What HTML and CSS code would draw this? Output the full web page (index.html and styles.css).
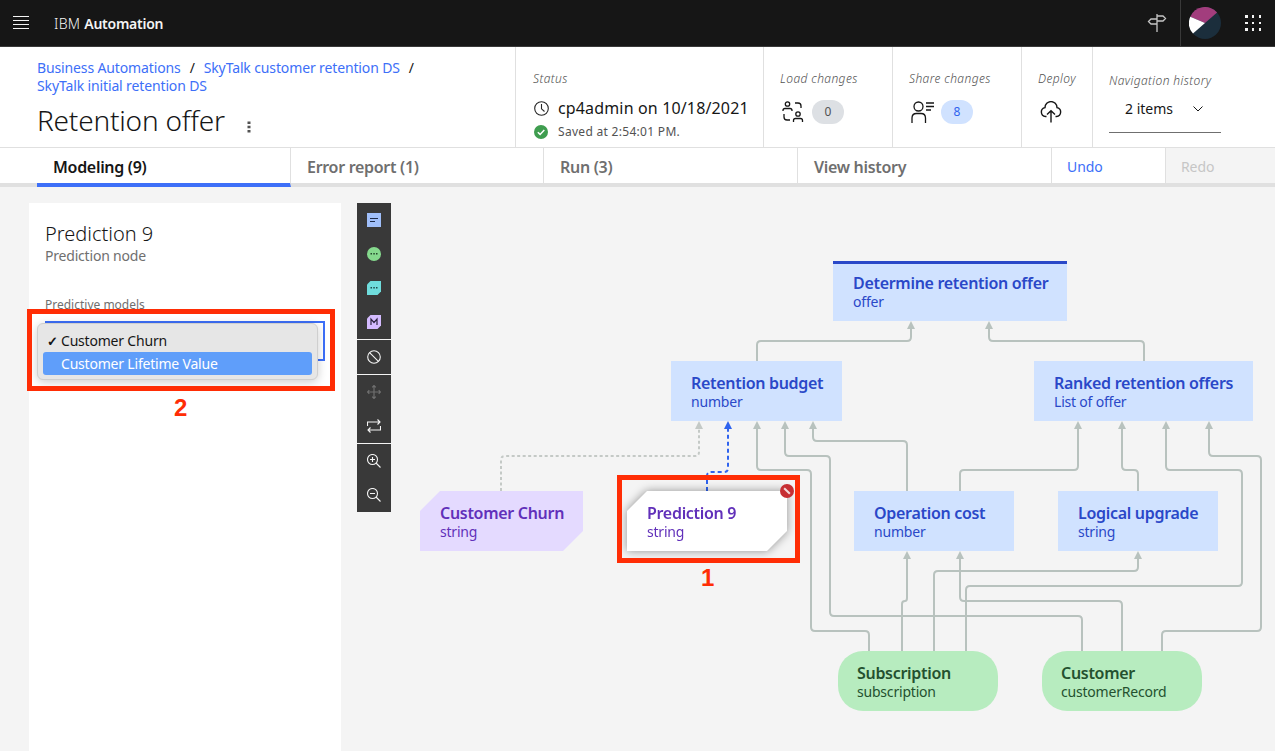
FILE: index.html
```html
<!DOCTYPE html>
<html lang="en">
	<head>
		<meta charset="UTF-8" />
		<meta name="viewport" content="width=device-width, initial-scale=1.0" />
		<title>Retention offer</title>
		<link rel="stylesheet" href="styles.css">
	</head>
	<body>
		<header class="topbar">
			<svg class="menu-icon" width="16" height="14" viewBox="0 0 16 14">
				<path d="M0 .5H16M0 4.5H16M0 8.5H16M0 12.5H16" stroke="#f4f4f4" fill="none" />
			</svg>
			<div class="brand">IBM <b>Automation</b></div>
			<svg class="sign-icon" width="20" height="20" viewBox="0 0 20 20">
				<path d="M10 1V19M10 3H16L18.5 5.5 16 8H10M10 6H4L1.5 8.5 4 11H10" stroke="#c6c6c6" stroke-width="1.3" fill="none" />
			</svg>
			<div class="avatar-cell">
				<svg width="32" height="32" viewBox="0 0 32 32">
					<circle cx="16" cy="16" r="16" fill="#1b2e3c" />
					<path d="M16 16L1.3 9.7A16 16 0 0 1 28.1 5.5Z" fill="#a23d7d" />
					<path d="M16 16L1.3 9.7A16 16 0 0 0 4 26.6Z" fill="#fff" />
				</svg>
			</div>
			<div class="apps-icon">
				<i></i><i></i><i></i><i></i><i></i><i></i><i></i><i></i><i></i>
			</div>
		</header>

		<section class="subheader">
			<div class="title-block">
				<nav class="crumbs">
					<a>Business Automations</a><span>/</span><a>SkyTalk customer retention DS</a><span>/</span><br />
					<a>SkyTalk initial retention DS</a>
				</nav>
				<div class="title-row">
					<h1>Retention offer</h1>
					<svg width="4" height="12" viewBox="0 0 4 12">
						<path d="M.5 .5h3v2.5h-3zM.5 4.8h3v2.5h-3zM.5 9h3v2.5h-3z" fill="#525252" />
					</svg>
				</div>
			</div>

			<div class="info status">
				<div class="info-label">Status</div>
				<div class="status-line">
					<svg width="15" height="15" viewBox="0 0 15 15" fill="none" stroke="#262626" stroke-width="1.1">
						<circle cx="7.5" cy="7.5" r="6.8" />
						<path d="M7.5 3V7.8L10.5 10.5" />
					</svg>
					<span>cp4admin on 10/18/2021</span>
				</div>
				<div class="saved-line">
					<svg width="14" height="14" viewBox="0 0 14 14">
						<circle cx="7" cy="7" r="7" fill="#3f9d4f" />
						<path d="M3.8 7.2L6.1 9.4 10.3 5" stroke="#fff" stroke-width="1.5" fill="none" />
					</svg>
					<span>Saved at 2:54:01 PM.</span>
				</div>
			</div>

			<div class="info load">
				<div class="info-label">Load changes</div>
				<div class="action-line">
					<svg width="22" height="22" viewBox="0 0 22 22" fill="none" stroke="#161616" stroke-width="1.3">
						<circle cx="5.5" cy="3" r="2.2" />
						<path d="M1 10V9.5Q1 7.5 3 7.5H8Q10 7.5 10 9.5V10" />
						<path d="M13 2H16Q19 2 19 5V7" />
						<path d="M2 13V16Q2 19 5 19H8" />
						<circle cx="16" cy="13" r="2.2" />
						<path d="M11.5 21V19.5Q11.5 17.5 13.5 17.5H18.5Q20.5 17.5 20.5 19.5V21" />
					</svg>
					<span class="badge">0</span>
				</div>
			</div>

			<div class="info share">
				<div class="info-label">Share changes</div>
				<div class="action-line">
					<svg width="23" height="22" viewBox="0 0 23 22" fill="none" stroke="#161616" stroke-width="1.3">
						<circle cx="7.5" cy="5.5" r="4.5" />
						<path d="M1 22V17Q1 12.5 5.5 12.5H10Q14.5 12.5 14.5 17V22" />
						<path d="M15 2H23M15 5.5H23M15 9H20" />
					</svg>
					<span class="badge badge-blue">8</span>
				</div>
			</div>

			<div class="info deploy">
				<div class="info-label">Deploy</div>
				<div class="action-line">
					<svg width="22" height="22" viewBox="0 0 22 22" fill="none" stroke="#161616" stroke-width="1.4">
						<path d="M6.5 15.5H5.5A4.5 4.5 0 0 1 5 6.6 6 6 0 0 1 17 6.6 4.5 4.5 0 0 1 16.5 15.5H15.5" />
						<path d="M11 21.5V10M7 13.5L11 9.7 15 13.5" />
					</svg>
				</div>
			</div>

			<div class="info history">
				<div class="info-label">Navigation history</div>
				<div class="history-select">
					<span>2 items</span>
					<svg width="10" height="6" viewBox="0 0 10 6">
						<path d="M.5 .5L5 5 9.5 .5" stroke="#161616" fill="none" />
					</svg>
				</div>
			</div>
		</section>

		<nav class="tabs">
			<a class="tab tab-active">Modeling (9)</a>
			<a class="tab tab-error">Error report (1)</a>
			<a class="tab tab-run">Run (3)</a>
			<a class="tab tab-view">View history</a>
			<a class="tab-action tab-undo">Undo</a>
			<a class="tab-action tab-redo">Redo</a>
		</nav>

		<main class="workspace">
			<aside class="panel">
				<h2>Prediction 9</h2>
				<div class="panel-sub">Prediction node</div>
				<div class="field-label">Predictive models</div>
				<div class="select-box"></div>
				<ul class="dropdown">
					<li><span class="tick">✓</span>Customer Churn</li>
					<li class="dropdown-hover">Customer Lifetime Value</li>
				</ul>
				<div class="callout callout-panel"></div>
				<div class="callout-num num-panel">2</div>
			</aside>

			<div class="toolbar">
				<div class="tool-group">
					<div class="tool">
						<svg width="14" height="14" viewBox="0 0 14 14"><rect width="14" height="14" fill="#a0bffa" /><path d="M3 5.5H11M3 8.5H8" stroke="#1c2a48" /></svg>
					</div>
					<div class="tool">
						<svg width="14" height="14" viewBox="0 0 14 14"><circle cx="7" cy="7" r="7" fill="#85d98d" /><path d="M3.5 6h1.5v1.5h-1.5zM6.3 6h1.5v1.5h-1.5zM9 6h1.5v1.5h-1.5z" fill="#24482c" /></svg>
					</div>
					<div class="tool">
						<svg width="14" height="14" viewBox="0 0 14 14"><path d="M3.5 0H14V10.5L10.5 14H0V3.5Z" fill="#6fdcdc" /><path d="M3.5 6h1.5v1.5h-1.5zM6.3 6h1.5v1.5h-1.5zM9 6h1.5v1.5h-1.5z" fill="#1f4a4a" /></svg>
					</div>
					<div class="tool">
						<svg width="14" height="14" viewBox="0 0 14 14"><path d="M3.5 0H14V10.5L10.5 14H0V3.5Z" fill="#d4bbff" /><path d="M4 10V4L7 7.5 10 4V10" stroke="#2d2540" stroke-width="1.2" fill="none" /></svg>
					</div>
				</div>
				<div class="tool-group">
					<div class="tool">
						<svg width="14" height="14" viewBox="0 0 14 14" fill="none" stroke="#f4f4f4" stroke-width="1.1"><circle cx="7" cy="7" r="6.3" /><path d="M2.6 2.6L11.4 11.4" /></svg>
					</div>
				</div>
				<div class="tool-group">
					<div class="tool">
						<svg width="14" height="14" viewBox="0 0 14 14" fill="none" stroke="#6f6f6f" stroke-width="1.2"><path d="M7 .5V13.5M.5 7H13.5M5.2 2.3L7 .5 8.8 2.3M5.2 11.7L7 13.5 8.8 11.7M2.3 5.2L.5 7 2.3 8.8M11.7 5.2L13.5 7 11.7 8.8" /></svg>
					</div>
					<div class="tool">
						<svg width="14" height="14" viewBox="0 0 14 14" fill="none" stroke="#f4f4f4" stroke-width="1.1"><path d="M.5 7V3H13M10.5 .5L13 3 10.5 5.5M13.5 7V11H1M3.5 8.5L1 11 3.5 13.5" /></svg>
					</div>
				</div>
				<div class="tool-group">
					<div class="tool">
						<svg width="14" height="14" viewBox="0 0 14 14" fill="none" stroke="#f4f4f4" stroke-width="1.1"><circle cx="5.5" cy="5.5" r="5" /><path d="M9 9L13.5 13.5M5.5 3V8M3 5.5H8" /></svg>
					</div>
					<div class="tool">
						<svg width="14" height="14" viewBox="0 0 14 14" fill="none" stroke="#f4f4f4" stroke-width="1.1"><circle cx="5.5" cy="5.5" r="5" /><path d="M9 9L13.5 13.5M3 5.5H8" /></svg>
					</div>
				</div>
			</div>

			<div class="canvas">
				<svg class="wires" width="884" height="564" viewBox="391 187 884 564" fill="none">
					<defs>
						<marker id="arrow" markerUnits="userSpaceOnUse" markerWidth="8" markerHeight="8" refX="0" refY="4" orient="auto">
							<path d="M0 0L8 4 0 8Z" fill="#b8c2be" />
						</marker>
						<marker id="arrow-dot" markerUnits="userSpaceOnUse" markerWidth="8" markerHeight="8" refX="0" refY="4" orient="auto">
							<path d="M0 0L8 4 0 8Z" fill="#c4c9c6" />
						</marker>
						<marker id="arrow-blue" markerUnits="userSpaceOnUse" markerWidth="8" markerHeight="8" refX="0" refY="4" orient="auto">
							<path d="M0 0L8 4 0 8Z" fill="#2f63ee" />
						</marker>
					</defs>
					<g stroke="#b8c2be" stroke-width="2">
						<path marker-end="url(#arrow)" d="M757 361V345Q757 341 761 341H907Q911 341 911 337V329" />
						<path marker-end="url(#arrow)" d="M1144 361V345Q1144 341 1140 341H993Q989 341 989 337V329" />
						<path marker-end="url(#arrow)" d="M869 651V635Q869 631 865 631H815Q811 631 811 627V474Q811 470 807 470H761Q757 470 757 466V429" />
						<path marker-end="url(#arrow)" d="M1082 651V620Q1082 616 1078 616H834Q830 616 830 612V460Q830 456 826 456H789Q785 456 785 452V429" />
						<path marker-end="url(#arrow)" d="M907 491V445Q907 441 903 441H817Q813 441 813 437V429" />
						<path marker-end="url(#arrow)" d="M960 491V474Q960 470 964 470H1074Q1078 470 1078 466V429" />
						<path marker-end="url(#arrow)" d="M1138 491V474Q1138 470 1134 470H1126Q1122 470 1122 466V429" />
						<path marker-end="url(#arrow)" d="M966 651V590Q966 586 970 586H1238Q1242 586 1242 582V474Q1242 470 1238 470H1170Q1166 470 1166 466V429" />
						<path marker-end="url(#arrow)" d="M1162 651V635Q1162 631 1166 631H1257Q1261 631 1261 627V460Q1261 456 1257 456H1213Q1209 456 1209 452V429" />
						<path marker-end="url(#arrow)" d="M902 651V604Q902 601 905 601Q907 601 907 598V559" />
						<path marker-end="url(#arrow)" d="M1122 651V605Q1122 601 1118 601H964Q960 601 960 597V559" />
						<path marker-end="url(#arrow)" d="M934 651V575Q934 571 938 571H1134Q1138 571 1138 567V559" />
					</g>
					<path d="M501 491V460Q501 456 505 456H695Q699 456 699 452V429" stroke="#c4c9c6" stroke-width="2" stroke-dasharray="3 2.5" marker-end="url(#arrow-dot)" />
					<path d="M707 491V476Q707 472 711 472H724Q728 472 728 468V429" stroke="#2f63ee" stroke-width="2" stroke-dasharray="4 3" marker-end="url(#arrow-blue)" />
				</svg>

				<div class="node decision node-determine"><b>Determine retention offer</b><span>offer</span></div>
				<div class="node decision node-budget"><b>Retention budget</b><span>number</span></div>
				<div class="node decision node-ranked"><b>Ranked retention offers</b><span>List of offer</span></div>
				<div class="node decision node-cost"><b>Operation cost</b><span>number</span></div>
				<div class="node decision node-upgrade"><b>Logical upgrade</b><span>string</span></div>
				<div class="node prediction node-churn"><b>Customer Churn</b><span>string</span></div>
				<div class="selected-wrap">
					<div class="node prediction node-selected"><b>Prediction 9</b><span>string</span></div>
				</div>
				<div class="error-dot"></div>
				<div class="node data node-subscription"><b>Subscription</b><span>subscription</span></div>
				<div class="node data node-customer"><b>Customer</b><span>customerRecord</span></div>
				<div class="callout callout-node"></div>
				<div class="callout-num num-node">1</div>
			</div>
		</main>
	</body>
</html>
```

FILE: styles.css
```css
* {
	box-sizing: border-box;
}

html,
body {
	height: 751px;
}

body {
	margin: 0;
	overflow: hidden;
	display: flex;
	flex-direction: column;
	font-family: "Noto Sans", Arial, sans-serif;
	background-color: #f4f4f4;
	color: #161616;
}

.topbar {
	flex: none;
	height: 47px;
	display: flex;
	align-items: center;
	background-color: #161616;
	border-bottom: 1px solid #393939;
	color: #f4f4f4;
}

.menu-icon {
	margin-left: 13px;
}

.brand {
	margin-left: 25px;
	font-size: 14px;
	font-weight: 300;
	letter-spacing: 0.3px;
}

.brand b {
	font-weight: 600;
	letter-spacing: -0.25px;
}

.sign-icon {
	margin-left: auto;
	margin-right: 13px;
}

.avatar-cell {
	height: 46px;
	padding: 7px 0 7px 8px;
	border-left: 1px solid #393939;
}

.apps-icon {
	display: grid;
	grid-template-columns: repeat(3, 2.5px);
	gap: 4.2px;
	margin: 0 14px 0 24px;
}

.apps-icon i {
	width: 2.5px;
	height: 2.5px;
	background-color: #f4f4f4;
}

.subheader {
	flex: none;
	height: 101px;
	display: flex;
	background-color: #fff;
	border-bottom: 1px solid #e0e0e0;
}

.title-block {
	width: 516px;
	padding: 12px 0 0 37px;
	border-right: 1px solid #e0e0e0;
}

.crumbs {
	font-size: 14px;
	line-height: 18px;
	letter-spacing: -0.13px;
}

.crumbs a {
	color: #3d6ff8;
}

.crumbs span {
	margin: 0 9px;
}

.title-row {
	display: flex;
	align-items: flex-end;
	margin-top: 7px;
}

.title-row h1 {
	margin: 0;
	font-size: 28px;
	line-height: 36px;
	font-weight: 300;
	letter-spacing: -0.2px;
}

.title-row svg {
	margin: 0 0 5px 22px;
}

.info {
	padding: 24px 0 0 16px;
	border-right: 1px solid #e0e0e0;
}

.info-label {
	font-size: 12px;
	line-height: 16px;
	font-weight: 300;
	font-style: italic;
	color: #525252;
	letter-spacing: 0.4px;
}

.status {
	width: 248px;
	padding-left: 17px;
}

.load {
	width: 129px;
}

.share {
	width: 129px;
}

.deploy {
	width: 71px;
}

.status-line {
	display: flex;
	align-items: center;
	gap: 9px;
	margin-top: 9px;
	font-size: 16px;
	line-height: 24px;
	letter-spacing: 0.15px;
}

.status-line svg,
.saved-line svg {
	flex: none;
	margin-left: 1px;
}

.saved-line {
	display: flex;
	align-items: center;
	gap: 10px;
	margin-top: 4px;
	font-size: 12px;
	line-height: 16px;
	color: #525252;
	letter-spacing: 0.3px;
}

.action-line {
	display: flex;
	align-items: center;
	gap: 8px;
	margin-top: 13px;
	padding-left: 2px;
	height: 24px;
}

.share .action-line {
	gap: 7px;
}

.badge {
	width: 32px;
	height: 24px;
	border-radius: 12px;
	text-align: center;
	font-size: 12px;
	line-height: 24px;
	background-color: #dde0e4;
	color: #525252;
}

.badge-blue {
	background-color: #d0e2ff;
	color: #2f63ee;
}

.history {
	width: 128px;
	border-right: none;
	padding-top: 26px;
}

.history-select {
	width: 112px;
	height: 40px;
	margin-top: 4px;
	padding: 0 18px 8px 16px;
	display: flex;
	align-items: center;
	justify-content: space-between;
	font-size: 14px;
	border-bottom: 1px solid #6f6f6f;
}

.tabs {
	flex: none;
	height: 39px;
	display: flex;
	padding-left: 37px;
	background-color: #fff;
	border-bottom: 4px solid #e0e0e0;
}

.tab {
	height: 39px;
	padding: 9px 0 0 16px;
	font-size: 16px;
	line-height: 20px;
	font-weight: 600;
	letter-spacing: -0.3px;
	color: #6f6f6f;
	border-right: 1px solid #e0e0e0;
}

.tab-active {
	width: 254px;
	color: #161616;
	border-bottom: 4px solid #3d6ff8;
}

.tab-error {
	width: 253px;
}

.tab-run,
.tab-view {
	width: 254px;
}

.tab-action {
	height: 35px;
	padding: 9px 0 0 15px;
	font-size: 14px;
	line-height: 20px;
	letter-spacing: -0.1px;
}

.tab-undo {
	width: 114px;
	color: #3d6ff8;
	border-right: 1px solid #e0e0e0;
}

.tab-redo {
	flex: 1;
	color: #c6c6c6;
	background-color: #f4f4f4;
}

.workspace {
	flex: 1;
	display: flex;
	min-height: 0;
}

.panel {
	position: relative;
	flex: none;
	width: 312px;
	margin: 16px 0 0 29px;
	padding: 19px 16px;
	background-color: #fff;
}

.panel h2 {
	margin: 0;
	font-size: 20px;
	line-height: 24px;
	font-weight: 300;
}

.panel-sub {
	font-size: 14px;
	line-height: 20px;
	color: #6f6f6f;
	letter-spacing: -0.2px;
}

.field-label {
	margin-top: 31px;
	font-size: 12px;
	line-height: 16px;
	color: #6f6f6f;
}

.select-box {
	width: 280px;
	height: 40px;
	margin-top: 8px;
	border: 2px solid #3d6ff8;
}

.dropdown {
	position: absolute;
	left: 8px;
	top: 120px;
	width: 281px;
	height: 57px;
	margin: 0;
	padding: 5px;
	list-style: none;
	background-color: #e6e6e6;
	border: 1px solid #cfcfcf;
	border-radius: 6px;
	box-shadow: 0 2px 10px rgba(0, 0, 0, 0.2);
	font-size: 14px;
	letter-spacing: -0.2px;
}

.dropdown li {
	height: 23px;
	padding-left: 18px;
	line-height: 23px;
	border-radius: 3px;
}

.tick {
	display: inline-block;
	width: 14px;
	margin-left: -14px;
	font-size: 13px;
	font-weight: 700;
}

.dropdown .dropdown-hover {
	background-color: #5f9efa;
	color: #fff;
}

.callout {
	position: absolute;
	border: 5px solid #ff2d05;
}

.callout-panel {
	left: -2px;
	top: 106px;
	width: 308px;
	height: 82px;
}

.callout-node {
	left: 226px;
	top: 288px;
	width: 183px;
	height: 88px;
}

.callout-num {
	position: absolute;
	font-family: "Liberation Sans", Arial, sans-serif;
	font-size: 24px;
	line-height: 24px;
	font-weight: 700;
	color: #ff2d05;
}

.num-panel {
	left: 145px;
	top: 193px;
}

.num-node {
	left: 310px;
	top: 379px;
}

.toolbar {
	flex: none;
	width: 34px;
	height: 309px;
	margin: 16px 0 0 16px;
	background-color: #393939;
}

.tool-group {
	border-bottom: 1px solid #f4f4f4;
}

.tool-group:last-child {
	border-bottom: none;
}

.tool {
	height: 34px;
	display: flex;
	align-items: center;
	justify-content: center;
}

.canvas {
	position: relative;
	flex: 1;
}

.wires {
	position: absolute;
	left: 0;
	top: 0;
}

.node {
	position: absolute;
	width: 160px;
	height: 60px;
	padding: 12px 0 0 20px;
}

.node b,
.node span {
	display: block;
	white-space: nowrap;
}

.node b {
	font-size: 16px;
	line-height: 20px;
	font-weight: 600;
	letter-spacing: -0.3px;
}

.node span {
	font-size: 14px;
	line-height: 18px;
	letter-spacing: -0.2px;
}

.decision {
	background-color: #d0e2ff;
	color: #2a48c8;
}

.prediction {
	background-color: #e4daff;
	color: #6130ba;
	clip-path: polygon(20px 0, 100% 0, 100% 40px, calc(100% - 20px) 100%, 0 100%, 0 20px);
}

.data {
	background-color: #b7ecbf;
	color: #24512f;
	border-radius: 25px;
	padding-left: 19px;
}

.node-determine {
	left: 442px;
	top: 74px;
	width: 234px;
	border-top: 3px solid #2a48c8;
	padding-top: 9px;
}

.node-budget {
	left: 280px;
	top: 174px;
	width: 171px;
}

.node-ranked {
	left: 643px;
	top: 174px;
	width: 219px;
}

.node-cost {
	left: 463px;
	top: 304px;
}

.node-upgrade {
	left: 667px;
	top: 304px;
}

.node-churn {
	left: 29px;
	top: 304px;
	width: 163px;
}

.selected-wrap {
	position: absolute;
	left: 236px;
	top: 304px;
	width: 160px;
	height: 60px;
	filter: drop-shadow(0 0 5px rgba(0, 0, 0, 0.4));
}

.node-selected {
	position: static;
	background-color: #fff;
}

.error-dot {
	position: absolute;
	left: 389px;
	top: 297px;
	width: 14px;
	height: 14px;
	border-radius: 50%;
	background-color: #c62f33;
}

.error-dot::after {
	content: "";
	position: absolute;
	left: 3px;
	top: 6px;
	width: 8px;
	height: 2px;
	background-color: #f4d9da;
	transform: rotate(45deg);
}

.node-subscription {
	left: 447px;
	top: 464px;
}

.node-customer {
	left: 651px;
	top: 464px;
}
```
